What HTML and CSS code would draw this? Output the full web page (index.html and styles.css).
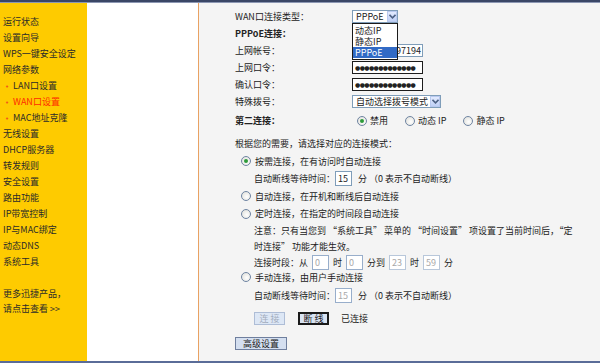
FILE: index.html
```html
<!DOCTYPE html>
<html lang="zh-CN">
<head>
    <meta charset="UTF-8">
    <meta name="viewport" content="width=device-width, initial-scale=1.0">
    <title>WAN口设置</title>
    <link rel="stylesheet" href="styles.css">
</head>
<body>
    <div class="frame">
        <div class="topbar"></div>
        <div class="layout">
            <!-- Left menu -->
            <div class="menu">
                <div class="menu-item">运行状态</div>
                <div class="menu-item">设置向导</div>
                <div class="menu-item">WPS一键安全设定</div>
                <div class="menu-item">网络参数</div>
                <div class="menu-item sub"><span class="dot">•</span>LAN口设置</div>
                <div class="menu-item sub active"><span class="dot">•</span>WAN口设置</div>
                <div class="menu-item sub"><span class="dot">•</span>MAC地址克隆</div>
                <div class="menu-item">无线设置</div>
                <div class="menu-item">DHCP服务器</div>
                <div class="menu-item">转发规则</div>
                <div class="menu-item">安全设置</div>
                <div class="menu-item">路由功能</div>
                <div class="menu-item">IP带宽控制</div>
                <div class="menu-item">IP与MAC绑定</div>
                <div class="menu-item">动态DNS</div>
                <div class="menu-item">系统工具</div>
                <div class="menu-more">
                    <div>更多迅捷产品，</div>
                    <div>请点击查看 &gt;&gt;</div>
                </div>
            </div>

            <div class="blank"></div>

            <!-- Main settings -->
            <div class="main">
                <div class="row">
                    <span class="label">WAN口连接类型：</span>
                    <div class="select-wrap">
                        <div class="select type-select">
                            <span class="select-text">PPPoE</span>
                            <span class="select-btn">
                                <svg width="7" height="5" viewBox="0 0 7 5"><path d="M0.5 0.8 L3.5 3.8 L6.5 0.8" fill="none" stroke="#4d6185" stroke-width="1.6"/></svg>
                            </span>
                        </div>
                        <ul class="options">
                            <li>动态IP</li>
                            <li>静态IP</li>
                            <li class="selected">PPPoE</li>
                        </ul>
                    </div>
                </div>
                <div class="row">
                    <span class="label bold">PPPoE连接：</span>
                </div>
                <div class="row">
                    <span class="label">上网帐号：</span>
                    <div class="input account"><span>097194</span></div>
                </div>
                <div class="row">
                    <span class="label">上网口令：</span>
                    <div class="input password"><span>●●●●●●●●●●●●●</span></div>
                </div>
                <div class="row">
                    <span class="label">确认口令：</span>
                    <div class="input password"><span>●●●●●●●●●●●●●</span></div>
                </div>
                <div class="row">
                    <span class="label">特殊拨号：</span>
                    <div class="select dial-select">
                        <span class="select-text">自动选择拨号模式</span>
                        <span class="select-btn">
                            <svg width="7" height="5" viewBox="0 0 7 5"><path d="M0.5 0.8 L3.5 3.8 L6.5 0.8" fill="none" stroke="#4d6185" stroke-width="1.6"/></svg>
                        </span>
                    </div>
                </div>
                <div class="row second">
                    <span class="label bold">第二连接：</span>
                    <div class="radio-group">
                        <span class="radio-item"><span class="radio checked"></span>禁用</span>
                        <span class="radio-item"><span class="radio"></span>动态 IP</span>
                        <span class="radio-item"><span class="radio"></span>静态 IP</span>
                    </div>
                </div>

                <div class="modes">
                    <div class="line">根据您的需要，请选择对应的连接模式：</div>
                    <div class="line opt"><span class="radio checked"></span>按需连接，在有访问时自动连接</div>
                    <div class="line sub-line">自动断线等待时间：<span class="box">15</span>分 （0 表示不自动断线）</div>
                    <div class="line opt"><span class="radio"></span>自动连接，在开机和断线后自动连接</div>
                    <div class="line opt"><span class="radio"></span>定时连接，在指定的时间段自动连接</div>
                    <div class="note">注意：只有当您到 “系统工具” 菜单的 “时间设置” 项设置了当前时间后，“定<br>时连接” 功能才能生效。</div>
                    <div class="line sub-line short">连接时段：从<span class="box off">0</span>时<span class="box off">0</span>分到<span class="box off light">23</span>时<span class="box off light">59</span>分</div>
                    <div class="line opt short"><span class="radio"></span>手动连接，由用户手动连接</div>
                    <div class="line sub-line wait">自动断线等待时间：<span class="box off">15</span>分 （0 表示不自动断线）</div>
                    <div class="buttons">
                        <button class="btn disabled">连 接</button>
                        <button class="btn focused">断 线</button>
                        <span class="status">已连接</span>
                    </div>
                    <div class="advanced">
                        <button class="btn wide">高级设置</button>
                    </div>
                </div>
            </div>
        </div>
        <div class="bottombar"></div>
    </div>
</body>
</html>
```

FILE: styles.css
```css
body {
    margin: 0;
    font-family: "Noto Sans CJK SC", "Noto Sans", sans-serif;
    font-size: 9px;
    line-height: 1;
    color: #222222;
}

.frame {
    width: 600px;
    height: 363px;
    display: flex;
    flex-direction: column;
    overflow: hidden;
}

.topbar {
    height: 2px;
    background-color: #3a4666;
    border-bottom: 1px solid #8c97b3;
}

.bottombar {
    height: 2px;
    background-color: #5a6c98;
}

.layout {
    flex: 1;
    display: flex;
}

/* Menu */
.menu {
    width: 87px;
    background-color: #fecb00;
    padding-top: 11px;
    box-sizing: border-box;
}

.menu-item {
    height: 16px;
    line-height: 16px;
    padding-left: 3px;
    color: #2a2a2a;
    white-space: nowrap;
}

.menu-item.sub {
    padding-left: 5px;
}

.menu-item .dot {
    font-family: "DejaVu Sans", sans-serif;
    font-size: 7px;
    color: #f05a1a;
    display: inline-block;
    width: 8px;
}

.menu-item.active {
    color: #ff2a00;
}

.menu-more {
    margin-top: 16px;
    padding-left: 3px;
    color: #2a2a2a;
}

.menu-more div {
    height: 15px;
    line-height: 15px;
}

.blank {
    width: 111px;
    background-color: #ffffff;
    border-right: 1px solid #e9a263;
}

/* Main */
.main {
    flex: 1;
    background-color: #f4f4f4;
    padding: 5px 0 0 36px;
}

.row {
    display: flex;
    align-items: center;
    height: 17px;
}

.row.second {
    margin-top: 2px;
}

.label {
    width: 117px;
    flex-shrink: 0;
}

.bold {
    font-weight: bold;
}

.select-wrap {
    position: relative;
}

.select {
    height: 13px;
    box-sizing: border-box;
    border: 1px solid #7f9db9;
    background-color: #ffffff;
    display: flex;
    align-items: center;
    justify-content: space-between;
}

.type-select {
    width: 46px;
}

.dial-select {
    width: 89px;
}

.select-text {
    padding-left: 3px;
    white-space: nowrap;
}

.select-btn {
    width: 10px;
    height: 11px;
    box-sizing: border-box;
    border: 1px solid #b9c9ef;
    background: linear-gradient(#e2eafe, #bfd0f6);
    display: flex;
    align-items: center;
    justify-content: center;
}

.options {
    position: absolute;
    top: 13px;
    left: 0;
    width: 46px;
    margin: 0;
    padding: 1px 0;
    list-style: none;
    background-color: #ffffff;
    border: 1px solid #1a1a1a;
    box-sizing: border-box;
    z-index: 2;
}

.options li {
    height: 11px;
    line-height: 11px;
    padding-left: 2px;
}

.options li.selected {
    background-color: #316ac5;
    color: #ffffff;
}

.input {
    width: 71px;
    height: 13px;
    box-sizing: border-box;
    border: 1px solid #7f9db9;
    background-color: #ffffff;
    display: flex;
    align-items: center;
    overflow: hidden;
    white-space: nowrap;
}

.input.account {
    justify-content: flex-end;
    padding-right: 1px;
}

.input.password {
    border-color: #1c1c1c;
    padding-left: 2px;
}

.password span {
    font-family: "DejaVu Sans", sans-serif;
    font-size: 6px;
    letter-spacing: -0.6px;
}

.radio-group {
    display: flex;
    padding-left: 5px;
}

.radio-item {
    display: flex;
    align-items: center;
    margin-right: 17px;
}

.radio {
    width: 8px;
    height: 8px;
    border: 1px solid #6e84a2;
    border-radius: 50%;
    background: radial-gradient(circle at 60% 60%, #ffffff, #dcdcd6);
    margin-right: 3px;
    display: inline-flex;
    align-items: center;
    justify-content: center;
    flex-shrink: 0;
}

.radio.checked::after {
    content: "";
    width: 4px;
    height: 4px;
    border-radius: 50%;
    background-color: #2d9b3a;
}

/* Connection modes */
.modes {
    margin-top: 6px;
}

.line {
    height: 17.5px;
    display: flex;
    align-items: center;
    white-space: nowrap;
}

.line.short {
    height: 15px;
}

.line.opt {
    padding-left: 6px;
}

.line.opt .radio {
    margin-right: 4px;
}

.line.sub-line {
    padding-left: 19px;
}

.note {
    padding-left: 19px;
    line-height: 16px;
}

.line.wait {
    margin-top: 2px;
}

.box {
    width: 17px;
    height: 15px;
    box-sizing: border-box;
    border: 1px solid #7f9db9;
    background-color: #ffffff;
    display: inline-flex;
    align-items: center;
    padding-left: 2px;
    margin: 0 6px 0 0;
}

.box.off {
    color: #a8a8a8;
    border-color: #98aecb;
}

.box.light {
    border-color: #b8c7da;
}

.short .box {
    margin: 0 4px;
}

.buttons {
    display: flex;
    align-items: center;
    padding-left: 19px;
    margin-top: 6px;
    height: 16px;
}

.btn {
    font-family: inherit;
    font-size: 9px;
    line-height: 1;
    height: 13px;
    width: 31px;
    padding: 0;
    box-sizing: border-box;
    background-color: #d9e4f3;
    border: 1px solid #8797b3;
    color: #222222;
}

.btn.disabled {
    color: #a3adbd;
    border-color: #aebdd6;
    background-color: #dde7f5;
}

.btn.focused {
    margin-left: 13px;
    border: 2px solid #1a1a1a;
}

.status {
    margin-left: 12px;
}

.advanced {
    margin-top: 11px;
}

.btn.wide {
    width: 52px;
    background-color: #d4dff0;
    border-color: #6f7f9e;
}
```
